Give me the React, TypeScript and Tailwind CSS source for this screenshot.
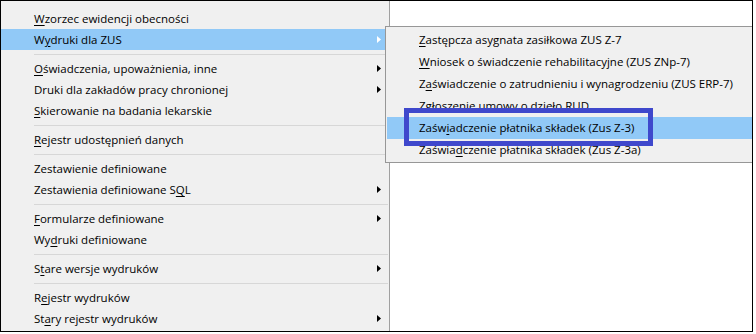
import React from "react";

type Item =
  | { sep: true }
  | { sep?: false; pre: string; key?: string; post?: string; arrow?: boolean; active?: boolean };

const main: Item[] = [
  { pre: "", key: "W", post: "zorzec ewidencji obecności" },
  { pre: "W", key: "y", post: "druki dla ZUS", arrow: true, active: true },
  { sep: true },
  { pre: "", key: "O", post: "świadczenia, upoważnienia, inne", arrow: true },
  { pre: "Druki dla zakładów pracy chronionej", arrow: true },
  { pre: "", key: "S", post: "kierowanie na badania lekarskie" },
  { sep: true },
  { pre: "", key: "R", post: "ejestr udostępnień danych" },
  { sep: true },
  { pre: "Zestawienie definiowane" },
  { pre: "Zestawienia definiowane S", key: "Q", post: "L", arrow: true },
  { sep: true },
  { pre: "", key: "F", post: "ormularze definiowane", arrow: true },
  { pre: "Wy", key: "d", post: "ruki definiowane" },
  { sep: true },
  { pre: "S", key: "t", post: "are wersje wydruków", arrow: true },
  { sep: true },
  { pre: "R", key: "e", post: "jestr wydruków" },
  { pre: "St", key: "a", post: "ry rejestr wydruków", arrow: true },
];

const sub: Item[] = [
  { pre: "", key: "Z", post: "astępcza asygnata zasiłkowa ZUS Z-7" },
  { pre: "", key: "W", post: "niosek o świadczenie rehabilitacyjne (ZUS ZNp-7)" },
  { pre: "Z", key: "a", post: "świadczenie o zatrudnieniu i wynagrodzeniu (ZUS ERP-7)" },
  { pre: "Z", key: "g", post: "łoszenie umowy o dzieło RUD" },
  { pre: "Zaśw", key: "i", post: "adczenie płatnika składek (Zus Z-3)", active: true },
  { pre: "Zaświa", key: "d", post: "czenie płatnika składek (Zus Z-3a)" },
];

function Arrow({ white }: { white?: boolean }) {
  return (
    <svg width="4" height="7" viewBox="0 0 4 7" className="block">
      <polygon points="0,0 4,3.5 0,7" fill={white ? "#ffffff" : "#000000"} />
    </svg>
  );
}

function Label({ it }: { it: Exclude<Item, { sep: true }> }) {
  return (
    <span className="whitespace-nowrap">
      {it.pre}
      {it.key && <u className="underline underline-offset-[2px] decoration-1">{it.key}</u>}
      {it.post}
    </span>
  );
}

export default function App() {
  return (
    <div
      className="w-[756px] h-[334px] bg-white text-[11.5px] text-black"
      style={{ fontFamily: '"Open Sans", "Liberation Sans", Arial, sans-serif' }}
    >
      <div className="relative w-[753px] h-[332px] border border-black bg-white overflow-hidden flex">
        {/* Main menu */}
        <div className="w-[389px] h-full bg-[#f0f0f0] border-r border-[#a0a0a0] pt-[7px] flex flex-col">
          {main.map((it, i) =>
            it.sep ? (
              <div key={i} className="h-[8px] flex items-center pl-[33px] pr-[1px]">
                <div className="h-px w-full bg-[#d7d7d7]" />
              </div>
            ) : (
              <div
                key={i}
                className={
                  "h-[21px] flex items-center justify-between pl-[33px] pr-[8px] " +
                  (it.active ? "bg-[#91c9f7]" : "")
                }
              >
                <Label it={it} />
                {it.arrow && <Arrow white={it.active} />}
              </div>
            )
          )}
        </div>

        {/* Submenu */}
        <div className="absolute left-[384px] top-[25px] w-[380px] bg-[#f0f0f0] border border-[#979797] pt-[2px] pb-[1px] px-[1px] flex flex-col">
          {sub.map((it, i) =>
            it.sep ? null : (
              <div
                key={i}
                className={
                  "h-[22px] flex items-center pl-[32px] " + (it.active ? "bg-[#91c9f7]" : "")
                }
              >
                <Label it={it} />
              </div>
            )
          )}
        </div>

        {/* Annotation box */}
        <div className="absolute left-[403px] top-[107px] w-[249px] h-[38px] border-[5px] border-[#3f48cc]" />
      </div>
    </div>
  );
}
